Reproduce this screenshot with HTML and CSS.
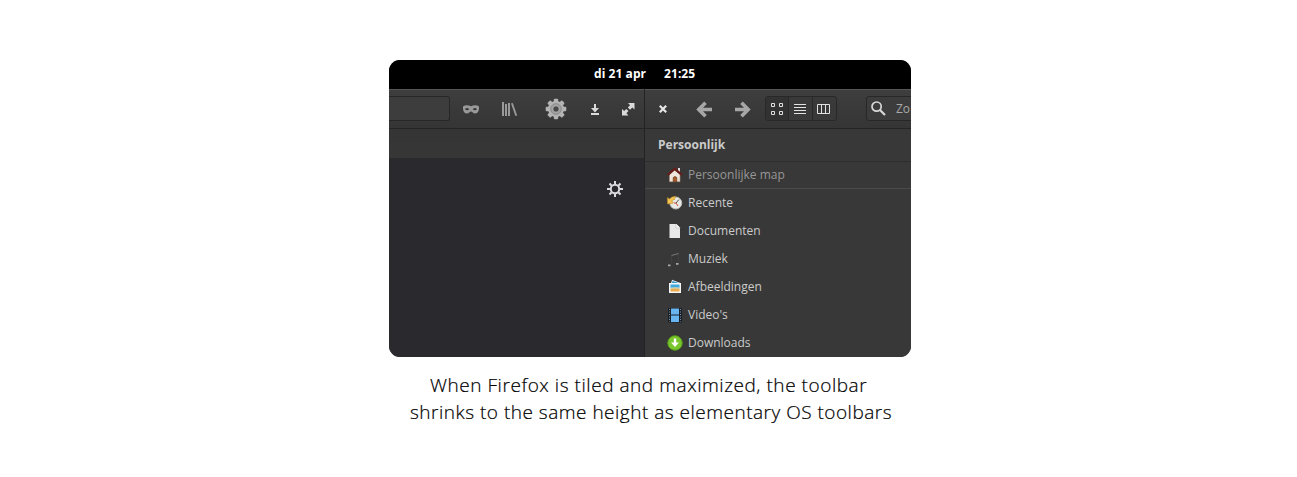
FILE: index.html
```html
<!DOCTYPE html>
<html lang="en">
<head>
<meta charset="utf-8">
<title>Firefox tiled</title>
<link rel="stylesheet" href="styles.css">
</head>
<body>
<figure class="figure">
  <div class="screen" lang="nl">
    <div class="panel"><span>di 21 apr</span><span class="time">21:25</span></div>
    <div class="windows">
      <section class="browser">
        <div class="toolbar">
          <div class="urlbar"></div>
          <svg class="mask" width="16" height="9" viewBox="0 0 16 9"><path fill="#999" fill-rule="evenodd" d="M0 1.500C2 0 5 0 8 1.300 11 0 14 0 16 1.500V4C15.600 7 14 8.500 12 8.500 10 8.500 9.500 6.500 8 6.500S6 8.500 4 8.500C2 8.500.4 7 0 4ZM2 4.200C3 5.500 5 5.500 6.300 4.300 5 2.700 3 2.700 2 4.200ZM9.700 4.300C11 5.500 13 5.500 14 4.200 13 2.700 11 2.700 9.700 4.300Z"/></svg>
          <svg class="library" width="16" height="15" viewBox="0 0 16 15"><path fill="#999" d="M0 0H2V14H0ZM3 2H5V14H3ZM6 1H8V14H6ZM9 1.400 10.800 1 15.200 13.400 13.400 14Z"/></svg>
          <svg class="gear" width="22" height="22" viewBox="-11 -11 22 22">
            <g fill="#b3b3b3"><circle r="8"/><rect x="-2.200" y="-10.300" width="4.400" height="20.600" rx="1"/><rect x="-10.300" y="-2.200" width="20.600" height="4.400" rx="1"/><rect x="-2.200" y="-10.300" width="4.400" height="20.600" rx="1" transform="rotate(45)"/><rect x="-2.200" y="-10.300" width="4.400" height="20.600" rx="1" transform="rotate(-45)"/></g>
            <circle r="5.300" fill="#a2a2a2" stroke="#8a8a8a"/><circle r="3" fill="#484848" stroke="#bbb" stroke-width=".5"/>
          </svg>
          <svg class="download" width="10" height="12" viewBox="0 0 10 12"><path fill="#dadada" d="M4 0H6V4H9L5 8.500 1 4H4ZM1 9H9V11H1Z"/></svg>
          <svg class="expand" width="13" height="13" viewBox="0 0 13 13"><path fill="#dadada" d="M6 0H12.500V6.500L10.300 4.600 8 6.800 5.800 4.600 8.100 2.300ZM0 6 2.200 8 4.300 5.900 6.500 8.100 4.400 10.200 6.500 12.500H0Z"/></svg>
        </div>
        <div class="tabs"></div>
        <div class="page">
          <svg class="settings" width="16" height="16" viewBox="-8 -8 16 16"><g fill="none" stroke="#dadadd" stroke-width="2"><circle r="4.200"/><path d="M0-8V-4.500M0 8V4.500M-8 0H-4.500M8 0H4.500M-5.500-5.500-3.300-3.300M5.500 5.500 3.300 3.300M-5.500 5.500-3.300 3.300M5.500-5.500 3.300-3.300"/></g></svg>
        </div>
      </section>
      <section class="files">
        <div class="toolbar">
          <svg class="close" width="8" height="8" viewBox="0 0 8 8"><path stroke="#e6e6e6" stroke-width="2.200" d="M.8.8 7.200 7.200M7.200.8.8 7.200"/></svg>
          <svg class="back" width="16" height="17" viewBox="0 0 16 17"><path fill="none" stroke="#a6a6a6" stroke-width="3.600" d="M9.500 1.800 2.800 8.500 9.500 15.200M3 8.500H16"/></svg>
          <svg class="forward" width="16" height="17" viewBox="0 0 16 17"><path fill="none" stroke="#a6a6a6" stroke-width="3.600" d="M6.500 1.800 13.200 8.500 6.500 15.200M13 8.500H0"/></svg>
          <div class="views">
            <span class="view active"><svg width="12" height="12" viewBox="0 0 12 12"><path fill="none" stroke="#e2e2e2" d="M.5.5H3.500V3.500H.5ZM8.500.5H11.500V3.500H8.500ZM.5 8.500H3.500V11.500H.5ZM8.500 8.500H11.500V11.500H8.500Z"/></svg></span>
            <span class="view"><svg width="12" height="12" viewBox="0 0 12 12"><path stroke="#e2e2e2" d="M0 1.500H12M0 4.500H12M0 7.500H12M0 10.500H12"/></svg></span>
            <span class="view"><svg width="13" height="12" viewBox="0 0 13 12"><path fill="none" stroke="#e2e2e2" d="M.5 1.500H12.500V10.500H.5ZM4.500 1V11M8.500 1V11"/></svg></span>
          </div>
          <div class="search"><svg class="lens" width="15" height="15" viewBox="0 0 15 15"><circle cx="5.600" cy="5.600" r="4.600" fill="none" stroke="#d8d8d8" stroke-width="1.700"/><path stroke="#d8d8d8" stroke-width="2.200" d="M9 9 14 14"/></svg><span>Zo</span></div>
        </div>
        <h2 class="heading">Persoonlijk</h2>
        <ul class="places">
          <li class="place selected"><svg width="16" height="16" viewBox="0 0 16 16"><path fill="#eee6dc" stroke="#a98c75" stroke-width=".6" d="M2.500 7.500 7.500 3 13 7.500V14.700H2.500Z"/><path fill="#ddd" d="M11 1H13V5H11Z"/><path fill="#a65a28" stroke="#633012" stroke-width=".6" d="M6.200 14.700V10.500Q8 8.500 9.800 10.500V14.700Z"/><path fill="none" stroke="#671c18" stroke-width="2.200" d="M.8 8 7.800 1.800 15 8"/></svg><span class="label">Persoonlijke map</span></li>
          <li class="place"><svg width="16" height="16" viewBox="0 0 16 16"><circle cx="8.800" cy="8" r="6" fill="#e8e8e4" stroke="#b8b8b5"/><path fill="none" stroke="#555" d="M12 4.500 9 8"/><path fill="none" stroke="#d34a3f" d="M7 8H9L11 11"/><path fill="#f1c453" stroke="#c08a22" stroke-width=".6" d="M.5 2.500 2.200 4Q5 1 8.500 1.500L7.500 4.500Q5.500 4.500 4.800 6L6.500 8 .5 9Z"/></svg><span class="label">Recente</span></li>
          <li class="place"><svg width="16" height="16" viewBox="0 0 16 16"><path fill="#e8e8e8" d="M2.500 1H9.500L13 4.500V15H2.500Z"/><path fill="#fff" stroke="#bbb" stroke-width=".7" d="M9 1V5H13"/></svg><span class="label">Documenten</span></li>
          <li class="place"><svg width="16" height="16" viewBox="0 0 16 16"><path fill="none" stroke="#686868" d="M4.500 12V4.500M11.500 10.500V2.500" opacity=".2"/><path stroke="#777" d="M4.500 4.500 11.500 2.500"/><path fill="#aaa" d="M1 13.500H3.500V15.200H1ZM9 12H11.500V13.800H9Z"/></svg><span class="label">Muziek</span></li>
          <li class="place"><svg width="16" height="16" viewBox="0 0 16 16"><path fill="#e3e9ee" d="M4 4 5 .8 13.500 4V6H4Z"/><path fill="#3093c7" d="M5 4 5.500 2 11.500 4Z"/><path fill="#f6f6f6" d="M2 4H14V14H2Z"/><path fill="#3ca9df" d="M3.500 5.500H12.500V9H3.500Z"/><path fill="#edab4b" d="M3.500 9.500Q8 7.500 12.500 9V12.500H3.500Z"/><path fill="#b8e1ee" d="M3.500 8.500H12.500V9.500H3.500Z"/></svg><span class="label">Afbeeldingen</span></li>
          <li class="place"><svg width="16" height="16" viewBox="0 0 16 16"><path fill="#18202a" d="M1 1H15V15.500H1Z"/><path fill="#68b5ef" d="M4 1.500H12V7.500H4ZM4 8.500H12V15H4Z"/><path stroke="#8290a0" stroke-dasharray="1 1.500" d="M2.500 2V15M13.500 2V15"/></svg><span class="label">Video's</span></li>
          <li class="place"><svg width="16" height="16" viewBox="0 0 16 16"><circle cx="8" cy="8" r="7.200" fill="#79c72d" stroke="#5aa41b"/><path fill="#fff" d="M6.800 3.500H9.200V7.500H12L8 12 4 7.500H6.800Z"/></svg><span class="label">Downloads</span></li>
        </ul>
      </section>
    </div>
  </div>
  <figcaption class="caption"><span class="line first">When Firefox is tiled and maximized, the toolbar</span><span class="line second">shrinks to the same height as elementary OS toolbars</span></figcaption>
</figure>
</body>
</html>
```
FILE: styles.css
```css
* { box-sizing: border-box; }
body { margin: 0; background: #fff; overflow: hidden; }
svg { display: block; flex: none; }

.figure { margin: 60px 0 0 389px; width: 522px; }
.screen {
  height: 297px;
  overflow: hidden;
  border-radius: 11px;
  background: #383838;
  font-family: "Open Sans", sans-serif;
  font-size: 12px;
  color: #cbcbcb;
}
.panel {
  height: 29px;
  padding-left: 205px;
  background: #000;
  color: #fff;
  font-weight: 700;
  line-height: 27px;
  letter-spacing: .06px;
  white-space: nowrap;
}
.time { margin-left: 18px; }
.windows { display: flex; height: 268px; }
.browser {
  display: flex;
  flex-direction: column;
  width: 256px;
  border-right: 1px solid #232323;
}
.files { width: 266px; background: #383838; }
.toolbar {
  display: flex;
  align-items: center;
  height: 40px;
  border-top: 1px solid #575657;
  border-bottom: 1px solid #252525;
  background: linear-gradient(#3e3e3e, #353535);
}
.urlbar {
  width: 61px;
  height: 25px;
  margin-bottom: 1px;
  border: 1px solid #272727;
  border-left: 0;
  border-radius: 0 3px 3px 0;
  background: #3d3d3d;
}
.mask { margin-left: 13px; }
.library { margin-left: 23px; }
.gear { margin-left: 27px; }
.download { margin: 1px 0 0 23px; }
.expand { margin-left: 22px; }
.tabs {
  height: 30px;
  border-bottom: 1px solid #292929;
  background: linear-gradient(#343434, #373737);
}
.page { flex: 1; padding: 22px 0 0 218px; background: #2a2a2e; }

.close { margin-left: 14px; }
.back { margin-left: 29px; }
.forward { margin-left: 23px; }
.views {
  display: flex;
  flex: none;
  width: 72px;
  height: 25px;
  margin: 0 0 1px 14px;
  border: 1px solid #282828;
  border-radius: 3px;
  background: #393939;
}
.view { display: grid; flex: none; width: 24px; place-items: center start; padding-left: 5px; border-right: 1px solid #292929; }
.view:last-child { width: 22px; padding-left: 4px; border-right: 0; }
.active { width: 23px; background: #323232; }
.search {
  display: flex;
  align-items: center;
  flex: none;
  width: 80px;
  height: 25px;
  margin: 0 0 1px 29px;
  padding-left: 4px;
  gap: 10px;
  border: 1px solid #272727;
  border-radius: 3px;
  background: #3c3c3c;
  color: #a9a9a9;
}
.lens { margin-bottom: 1px; }
.files .toolbar { overflow: hidden; }
.heading {
  height: 33px;
  margin: 0;
  padding-left: 13px;
  border-bottom: 1px solid #2e2e2e;
  font-size: 12px;
  line-height: 31px;
}
.places { margin: 0; padding: 0; list-style: none; }
.place {
  display: flex;
  align-items: center;
  height: 28px;
  padding-left: 22px;
  gap: 5px;
}
.label { padding-bottom: 2px; }
.selected {
  height: 27px;
  border-bottom: 1px solid #4b4b4b;
  color: #969696;
}

.caption {
  padding-top: 15px;
  color: #000;
  font-family: "Open Sans", sans-serif;
  font-size: 19px;
  font-weight: 300;
  line-height: 27px;
  letter-spacing: .5px;
  -webkit-text-stroke: .2px #000;
  white-space: nowrap;
}
.line { display: block; }
.first { padding-left: 41px; letter-spacing: .55px; }
.second { padding-left: 21px; }
```
